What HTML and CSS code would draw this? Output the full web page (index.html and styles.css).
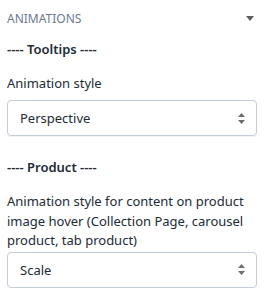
FILE: index.html
```html
<!DOCTYPE html>
<html>
<head>
<meta charset="utf-8">
<link rel="stylesheet" href="styles.css">
</head>
<body>
<div class="panel">
  <div class="header">
    <span class="title">ANIMATIONS</span>
    <svg class="caret" width="8" height="5" viewBox="0 0 8 5"><path d="M0 0h8L4 5z" fill="#5c5f62"/></svg>
  </div>
  <div class="heading first">---- Tooltips ----</div>
  <label class="label">Animation style</label>
  <div class="select">
    <span>Perspective</span>
    <svg class="updown" width="7" height="11" viewBox="0 0 7 11"><path d="M3.5 0L7 4H0z M3.5 11L0 7h7z" fill="#6b6f73"/></svg>
  </div>
  <div class="heading">---- Product ----</div>
  <label class="label long">Animation style for content on product image hover (Collection Page, carousel product, tab product)</label>
  <div class="select">
    <span>Scale</span>
    <svg class="updown" width="7" height="11" viewBox="0 0 7 11"><path d="M3.5 0L7 4H0z M3.5 11L0 7h7z" fill="#6b6f73"/></svg>
  </div>
</div>
</body>
</html>
```
FILE: styles.css
```css
html, body { margin: 0; padding: 0; background: #fff; }
body { font-family: "Noto Sans", "Open Sans", sans-serif; font-size: 13px; color: #212b36; }
.panel { padding: 8px 13px 0 7px; display: flex; flex-direction: column; }
.header { display: flex; justify-content: space-between; align-items: center; height: 20px; }
.title { font-size: 12px; color: #6b7a8f; }
.caret { margin-right: 3px; }
.heading { font-weight: 600; margin-top: 21px; line-height: 20px; }
.heading.first { margin-top: 11px; }
.label { display: block; margin-top: 14px; line-height: 20px; margin-bottom: 7px; }
.label.long { margin-top: 15px; margin-bottom: 1px; line-height: 19.5px; }
.select { height: 34px; border: 1px solid #c4cdd5; border-radius: 4px; display: flex; align-items: center; justify-content: space-between; padding: 0 11px 0 12px; box-shadow: 0 1px 0 rgba(22,29,37,0.05); }
.updown { display: block; }
```
